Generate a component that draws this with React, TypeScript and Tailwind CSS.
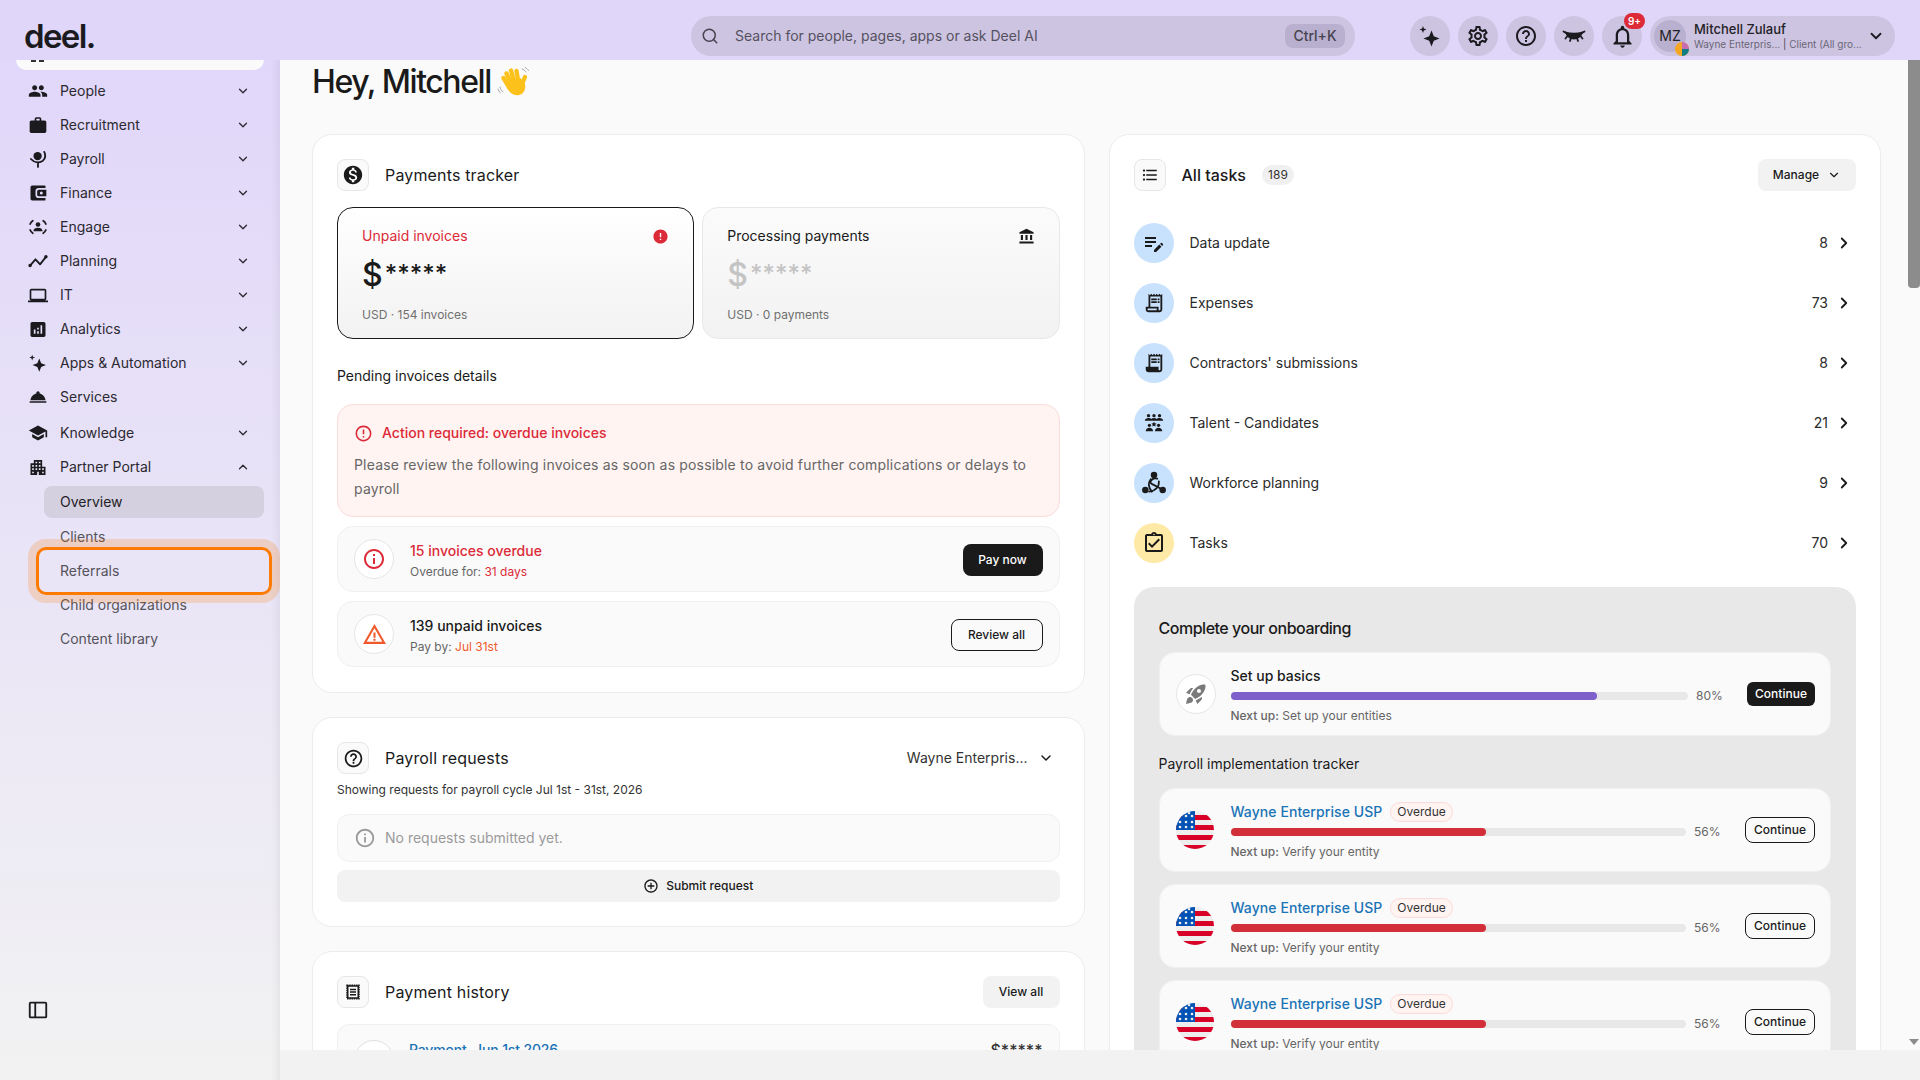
import type { ReactNode } from "react";
import { ChevronDown, ChevronRight, ChevronUp, Search } from "lucide-react";
import {
  MdAccountBalance,
  MdAddCircleOutline,
  MdAnalytics,
  MdApartment,
  MdEditNote,
  MdError,
  MdErrorOutline,
  MdFormatListBulleted,
  MdHelpOutline,
  MdInfoOutline,
  MdLaptop,
  MdMonetizationOn,
  MdOutlineAssignmentTurnedIn,
  MdOutlineNotifications,
  MdOutlineReceiptLong,
  MdOutlineSettings,
  MdPeople,
  MdReceiptLong,
  MdRocketLaunch,
  MdRoomService,
  MdSchool,
  MdWarningAmber,
  MdWork,
} from "react-icons/md";

function SparkleIcon({ size = 20 }: { size?: number }) {
  return (
    <svg width={size} height={size} viewBox="0 0 24 24" fill="currentColor">
      <path d="M13.5 6.5l2.3 5.7 5.7 2.3-5.7 2.3-2.3 5.7-2.3-5.7-5.7-2.3 5.7-2.3z" />
      <path d="M5 2l.9 2.6L8.5 5.5l-2.6.9L5 9l-.9-2.6L1.500 5.500l2.600-.9z" />
    </svg>
  );
}

function GlobeIcon() {
  return (
    <svg width={20} height={20} viewBox="0 0 24 24" fill="none" stroke="currentColor" strokeWidth="2.2" strokeLinecap="round">
      <circle cx="11.500" cy="8.500" r="5" fill="currentColor" stroke="none" />
      <path d="M19.500 3.500c2 4 1 8-1.500 10.500-3.500 3-10 3-14.500-2" />
      <path d="M12 17.500v4" />
    </svg>
  );
}

function WalletIcon() {
  return (
    <svg width={20} height={20} viewBox="0 0 24 24" fill="currentColor">
      <path fillRule="evenodd" d="M5 3h15a1 1 0 0 1 1 1v2h-8a4 4 0 0 0-4 4v4a4 4 0 0 0 4 4h8v2a1 1 0 0 1-1 1H5a2 2 0 0 1-2-2V5a2 2 0 0 1 2-2z" />
      <path fillRule="evenodd" d="M13 8h9v8h-9a2 2 0 0 1-2-2v-4a2 2 0 0 1 2-2zm3 2.200a1.800 1.800 0 1 0 0 3.600 1.800 1.800 0 0 0 0-3.600z" />
    </svg>
  );
}

function EngageIcon() {
  return (
    <svg width={20} height={20} viewBox="0 0 24 24" fill="none" stroke="currentColor" strokeWidth="2" strokeLinecap="round">
      <circle cx="12" cy="9" r="2.800" fill="currentColor" stroke="none" />
      <path d="M6.500 17c0-2.600 2.500-4 5.500-4s5.500 1.400 5.500 4z" fill="currentColor" stroke="none" />
      <path d="M2.500 8.500c.8-1.800 1.800-3 3.300-4M21.500 8.500c-.8-1.800-1.800-3-3.300-4M2.500 15.500c.8 1.800 1.800 3 3.300 4M21.500 15.500c-.8 1.800-1.800 3-3.300 4" />
    </svg>
  );
}

function PlanningIcon() {
  return (
    <svg width={22} height={22} viewBox="0 0 24 24" fill="none" stroke="currentColor" strokeWidth="2.200" strokeLinecap="round" strokeLinejoin="round">
      <path d="M2.500 17.500L9 10l5.500 6L21.500 7" />
      <circle cx="2.500" cy="17.500" r="1" fill="currentColor" />
      <circle cx="21.500" cy="7" r="1" fill="currentColor" />
    </svg>
  );
}

function LashIcon() {
  return (
    <svg width={24} height={24} viewBox="0 0 24 24" fill="currentColor" stroke="currentColor" strokeWidth="1.800" strokeLinecap="round">
      <path d="M4 8.500c4 1.500 12 1.500 16 0-1.500 4-4.500 6-8 6s-6.500-2-8-6z" />
      <path d="M4 9L1.500 7.500M20 9l2.500-1.500M5.500 12l-2 2.500M18.500 12l2 2.500M9 14l-1 3M15 14l1 3" fill="none" />
    </svg>
  );
}

function TalentIcon() {
  return (
    <svg width={22} height={22} viewBox="0 0 24 24" fill="currentColor">
      <circle cx="6" cy="4" r="1.800" />
      <circle cx="12" cy="4" r="1.800" />
      <circle cx="18" cy="4" r="1.800" />
      <path d="M2 9.500c0-2 2-3 4-3 1.300 0 2.400.4 3 1.100.7-.7 1.800-1.100 3-1.100s2.300.4 3 1.100c.6-.7 1.700-1.100 3-1.100 2 0 4 1 4 3z" />
      <path d="M12 10.500l.9 1.800 1.900.3-1.400 1.300.4 1.900-1.800-.9-1.800.9.400-1.900-1.400-1.300 1.900-.3z" />
      <circle cx="7" cy="14.500" r="1.800" />
      <circle cx="17" cy="14.500" r="1.800" />
      <path d="M3 21c0-2.500 1.800-3.800 4-3.800S11 18.500 11 21zM13 21c0-2.500 1.800-3.800 4-3.800s4 1.300 4 3.800z" />
    </svg>
  );
}

function WorkforceIcon() {
  return (
    <svg width={26} height={26} viewBox="0 0 24 24" fill="none" stroke="currentColor" strokeWidth="1.700" strokeLinecap="round">
      <circle cx="12" cy="4.500" r="3" fill="currentColor" stroke="none" />
      <circle cx="4" cy="18.500" r="3" fill="currentColor" stroke="none" />
      <circle cx="20" cy="18.500" r="3" fill="currentColor" stroke="none" />
      <path d="M9 8.500C6.500 12 7 16.500 10 20" />
      <path d="M15 8c-3.500-1-6 1-6.500 3.500 1.500 2.500 6 3 9 5.500" />
      <path d="M16.500 10.500c.5 4-2 8.500-9 9.500" />
    </svg>
  );
}

function HistoryIcon() {
  return (
    <svg width={18} height={18} viewBox="0 0 24 24" fill="none" stroke="currentColor" strokeWidth="2">
      <rect x="4" y="3" width="16" height="18" strokeDasharray="2 1" />
      <rect x="5" y="4" width="14" height="16" />
      <path d="M8 8.500h8M8 12h8M8 15.500h8" />
    </svg>
  );
}

function PanelIcon() {
  return (
    <svg width={22} height={22} viewBox="0 0 24 24" fill="none" stroke="currentColor" strokeWidth="2">
      <rect x="3" y="4" width="18" height="16" rx="1" />
      <path d="M9 4v16" />
    </svg>
  );
}

function UsFlag({ id }: { id: string }) {
  return (
    <svg width={38} height={38} viewBox="0 0 38 38" className="shrink-0">
      <defs>
        <clipPath id={id}>
          <circle cx="19" cy="19" r="19" />
        </clipPath>
      </defs>
      <g clipPath={`url(#${id})`}>
        <rect width="38" height="38" fill="#eeeeee" />
        <rect y="4" width="38" height="5" fill="#d80027" />
        <rect y="14" width="38" height="5" fill="#d80027" />
        <rect y="24" width="38" height="5" fill="#d80027" />
        <rect y="34" width="38" height="5" fill="#d80027" />
        <rect width="19" height="19" fill="#0052b4" />
        {[[5, 11], [11, 5], [11, 11], [17, 5], [17, 11], [5, 16], [11, 16], [17, 16], [14, 2]].map(([x, y]) => (
          <circle key={`${x}-${y}`} cx={x - 1} cy={y} r="1.300" fill="#eeeeee" />
        ))}
      </g>
    </svg>
  );
}

function WaveHand() {
  return (
    <svg width={34} height={34} viewBox="0 0 34 34" fill="none" strokeLinecap="round">
      <g stroke="#fcc21b">
        <path d="M12 22L6.500 13" strokeWidth="4.400" />
        <path d="M14 18L9.500 8.500" strokeWidth="4.400" />
        <path d="M17 16L14 5.500" strokeWidth="4.400" />
        <path d="M21 15L19.500 6" strokeWidth="4.400" />
        <path d="M25 19l3-7" strokeWidth="4.400" />
        <path d="M10 20c2 7 7 10 12 9 4-1 6-5 5-10l-4-5-9 2z" fill="#fcc21b" strokeWidth="2" />
      </g>
      <path d="M3 22c.5 2 1.500 4 3 5M1 24c.6 1.500 1.200 2.800 2.400 4M25 4c1.500.5 3 1.500 4 3M28 2.500c1.500.6 2.500 1.500 3.500 3" stroke="#9e9e9e" strokeWidth="0.900" />
    </svg>
  );
}

const navItems: { label: string; icon: ReactNode; chevron?: boolean }[] = [
  { label: "People", icon: <MdPeople size={22} />, chevron: true },
  { label: "Recruitment", icon: <MdWork size={21} />, chevron: true },
  { label: "Payroll", icon: <GlobeIcon />, chevron: true },
  { label: "Finance", icon: <WalletIcon />, chevron: true },
  { label: "Engage", icon: <EngageIcon />, chevron: true },
  { label: "Planning", icon: <PlanningIcon />, chevron: true },
  { label: "IT", icon: <MdLaptop size={23} />, chevron: true },
  { label: "Analytics", icon: <MdAnalytics size={21} />, chevron: true },
  { label: "Apps & Automation", icon: <SparkleIcon />, chevron: true },
  { label: "Services", icon: <MdRoomService size={22} /> },
];

const tasks: { label: string; count: number; icon: ReactNode; yellow?: boolean }[] = [
  { label: "Data update", count: 8, icon: <MdEditNote size={24} /> },
  { label: "Expenses", count: 73, icon: <MdOutlineReceiptLong size={22} /> },
  { label: "Contractors' submissions", count: 8, icon: <MdReceiptLong size={22} /> },
  { label: "Talent - Candidates", count: 21, icon: <TalentIcon /> },
  { label: "Workforce planning", count: 9, icon: <WorkforceIcon /> },
  { label: "Tasks", count: 70, icon: <MdOutlineAssignmentTurnedIn size={24} />, yellow: true },
];

function NavRow({ label, icon, chevron }: { label: string; icon: ReactNode; chevron?: boolean }) {
  return (
    <div className="flex h-[34px] items-center pl-7 pr-[30px] text-sm text-[#2b2930]">
      <span className="flex w-5 items-center justify-center text-[#1b1b1f]">{icon}</span>
      <span className="ml-3 flex-1">{label}</span>
      {chevron && <ChevronDown size={14} strokeWidth={2.2} />}
    </div>
  );
}

function Sidebar() {
  return (
    <aside className="w-[280px] shrink-0 bg-gradient-to-b from-[#e1d7fa] to-[#f2f2f2] shadow-[inset_-10px_0_10px_-8px_rgba(0,0,0,0.07)] flex flex-col">
      <div className="mx-4 h-[10px] w-[248px] rounded-b-xl bg-[#fafafa] flex gap-[3px] pl-[15px]">
        <span className="h-[2px] w-[5px] bg-[#333]" />
        <span className="h-[2px] w-[5px] bg-[#333]" />
      </div>
      <div className="mt-1">
        {navItems.map((item) => (
          <NavRow key={item.label} {...item} />
        ))}
      </div>
      <div className="mt-[2px]">
        <NavRow label="Knowledge" icon={<MdSchool size={22} />} chevron />
      </div>
      <div className="flex h-[34px] items-center pl-7 pr-[30px] text-sm text-[#2b2930]">
        <span className="flex w-5 items-center justify-center text-[#1b1b1f]">
          <MdApartment size={21} />
        </span>
        <span className="ml-3 flex-1">Partner Portal</span>
        <ChevronUp size={14} strokeWidth={2.2} />
      </div>
      <div className="mt-[2px] pl-11 pr-4 text-sm text-[#55535b]">
        <div className="flex h-8 items-center rounded-lg bg-[#d5d0e0] pl-[16px] text-[#232226]">Overview</div>
        <div className="mt-[2px] flex h-[34px] items-center pl-[16px]">Clients</div>
        <div className="relative flex h-[34px] items-center pl-[16px]">
          Referrals
          <div className="absolute left-[-16px] top-[-15px] h-[64px] w-[252px] rounded-[18px] border-[8px] border-[#ff7a00]/20">
            <div className="h-full w-full rounded-[10px] border-[3px] border-[#ff7a00]" />
          </div>
        </div>
        <div className="flex h-[34px] items-center pl-[16px]">Child organizations</div>
        <div className="flex h-[34px] items-center pl-[16px]">Content library</div>
      </div>
      <div className="mt-auto mb-[59px] pl-[27px] text-[#1b1b1f]">
        <PanelIcon />
      </div>
    </aside>
  );
}

function RoundButton({ children }: { children: ReactNode }) {
  return (
    <div className="relative flex h-10 w-10 items-center justify-center rounded-full bg-[#cdc4e2] text-[#1b1b1f]">
      {children}
    </div>
  );
}

function TopBar() {
  return (
    <header className="flex h-[60px] shrink-0 items-center bg-[#e0d6f9] pl-6 pt-3">
      <div className="w-[667px] text-[33px] font-semibold leading-none tracking-[-0.05em] text-[#1b1b1f]">deel.</div>
      <div className="flex h-10 w-[664px] items-center rounded-full bg-[#cdc4e2] pl-[10px] pr-[10px]">
        <Search size={18} className="text-[#47444f]" strokeWidth={2} />
        <span className="ml-[16px] flex-1 text-sm text-[#55525f]">Search for people, pages, apps or ask Deel AI</span>
        <span className="flex h-6 w-[60px] items-center justify-center rounded-lg bg-[#b9b0cf] text-sm font-medium text-[#47444f]">
          Ctrl+K
        </span>
      </div>
      <div className="ml-[55px] flex gap-2">
        <RoundButton>
          <SparkleIcon size={24} />
        </RoundButton>
        <RoundButton>
          <MdOutlineSettings size={24} />
        </RoundButton>
        <RoundButton>
          <MdHelpOutline size={24} />
        </RoundButton>
        <RoundButton>
          <LashIcon />
        </RoundButton>
        <RoundButton>
          <MdOutlineNotifications size={27} />
          <span className="absolute right-[-3px] top-[-3px] flex h-4 w-[21px] items-center justify-center rounded-full bg-[#dc2a38] text-[10px] font-semibold text-white">
            9+
          </span>
        </RoundButton>
      </div>
      <div className="ml-2 flex h-10 w-[245px] items-center rounded-full bg-[#cdc4e2] pl-1 pr-[10px]">
        <div className="relative flex h-8 w-8 items-center justify-center rounded-full bg-[#b9b0cf] text-sm text-[#232226]">
          MZ
          <svg className="absolute right-[-3px] bottom-[-4px]" width={14} height={14} viewBox="0 0 14 14">
            <circle cx="7" cy="7" r="7" fill="#f5a623" />
            <path d="M7 0a7 7 0 0 1 7 7H7z" fill="#c76bb3" />
            <path d="M14 7a7 7 0 0 1-7 7V7z" fill="#0f7c86" />
          </svg>
        </div>
        <div className="ml-2 flex-1 min-w-0">
          <div className="text-[13px] leading-4 font-medium text-[#232226]">Mitchell Zulauf</div>
          <div className="whitespace-nowrap text-[10px] leading-[14px] text-[#6a6675]">
            Wayne Enterpris... <span className="text-[#47444f]">|</span> Client (All gro...
          </div>
        </div>
        <ChevronDown size={18} strokeWidth={2.4} className="text-[#1b1b1f]" />
      </div>
    </header>
  );
}

function IconBox({ children }: { children: ReactNode }) {
  return (
    <div className="flex h-8 w-8 shrink-0 items-center justify-center rounded-lg border border-[#e6e6e6] bg-[#fafafa] text-[#1a1a1a]">
      {children}
    </div>
  );
}

function Card({ children }: { children: ReactNode }) {
  return <section className="rounded-[20px] border border-[#ececec] bg-white p-6">{children}</section>;
}

function PaymentsTracker() {
  return (
    <section className="rounded-[20px] border border-[#ececec] bg-white p-6 pb-[25px]">
      <div className="flex items-center">
        <IconBox>
          <MdMonetizationOn size={22} />
        </IconBox>
        <span className="ml-4 text-base font-normal tracking-[0.01em] text-[#1a1a1a]">Payments tracker</span>
      </div>
      <div className="mt-4 grid grid-cols-2 gap-2">
        <div className="h-[132px] rounded-2xl border border-[#1a1a1a] bg-gradient-to-b from-white to-[#f2f2f2] px-6 pt-[18px]">
          <div className="flex h-5 items-center justify-between text-sm text-[#dc2a38]">
            Unpaid invoices
            <MdError size={17} />
          </div>
          <div className="mt-[9px] flex h-9 items-baseline font-medium leading-9 text-[#1a1a1a]">
            <span className="translate-y-[2px] text-[32px]">$</span>
            <span className="ml-[2px] -translate-y-[2px] text-[24px]">*****</span>
          </div>
          <div className="mt-4 h-4 text-xs leading-4 text-[#707070]">USD · 154 invoices</div>
        </div>
        <div className="h-[132px] rounded-2xl border border-[#e8e8e8] bg-gradient-to-b from-[#fbfbfb] to-[#f2f2f2] px-6 pt-[18px]">
          <div className="flex h-5 items-center justify-between text-sm text-[#1a1a1a]">
            Processing payments
            <MdAccountBalance size={17} />
          </div>
          <div className="mt-[9px] flex h-9 items-baseline font-medium leading-9 text-[#c4c4c4]">
            <span className="translate-y-[2px] text-[32px]">$</span>
            <span className="ml-[2px] -translate-y-[2px] text-[24px]">*****</span>
          </div>
          <div className="mt-4 h-4 text-xs leading-4 text-[#707070]">USD · 0 payments</div>
        </div>
      </div>
      <div className="mt-[27px] mb-[18px] text-sm leading-5 text-[#1a1a1a]">Pending invoices details</div>
      <div className="rounded-2xl border border-[#fbdcd9] bg-[#fff4f2] pl-4 pr-4 pt-[18px] pb-[15px]">
        <div className="flex h-5 items-center text-sm font-medium text-[#dc2a38]">
          <MdErrorOutline size={19} />
          <span className="ml-[9px]">Action required: overdue invoices</span>
        </div>
        <p className="mt-[10px] text-sm leading-6 tracking-[0.012em] text-[#666666]">
          Please review the following invoices as soon as possible to avoid further complications or delays to payroll
        </p>
      </div>
      <div className="mt-[9px] flex h-[66px] items-center rounded-2xl border border-[#f0f0f0] bg-[#fafafa] pl-4 pr-4">
        <div className="flex h-10 w-10 items-center justify-center rounded-full border border-[#e6e6e6] bg-white text-[#dc2a38]">
          <MdInfoOutline size={24} />
        </div>
        <div className="ml-4 flex-1 pt-[2px]">
          <div className="text-sm leading-5 font-medium text-[#dc2a38]">15 invoices overdue</div>
          <div className="mt-[3px] text-xs leading-4 text-[#666666]">
            Overdue for: <span className="text-[#dc2a38]">31 days</span>
          </div>
        </div>
        <button className="mt-[2px] h-8 w-20 rounded-lg bg-[#1a1a1a] text-xs font-medium text-white">Pay now</button>
      </div>
      <div className="mt-[9px] flex h-[66px] items-center rounded-2xl border border-[#f0f0f0] bg-[#fafafa] pl-4 pr-4">
        <div className="flex h-10 w-10 items-center justify-center rounded-full border border-[#e6e6e6] bg-white text-[#f0592b]">
          <MdWarningAmber size={25} />
        </div>
        <div className="ml-4 flex-1 pt-[2px]">
          <div className="text-sm leading-5 font-medium text-[#1a1a1a]">139 unpaid invoices</div>
          <div className="mt-[3px] text-xs leading-4 text-[#666666]">
            Pay by: <span className="text-[#f0592b]">Jul 31st</span>
          </div>
        </div>
        <button className="mt-[2px] h-8 w-[92px] rounded-lg border border-[#1a1a1a] text-xs font-medium text-[#1a1a1a]">Review all</button>
      </div>
    </section>
  );
}

function PayrollRequests() {
  return (
    <Card>
      <div className="flex items-center">
        <IconBox>
          <MdHelpOutline size={21} />
        </IconBox>
        <span className="ml-4 flex-1 text-base tracking-[0.01em] text-[#1a1a1a]">Payroll requests</span>
        <span className="text-sm text-[#333333]">Wayne Enterpris...</span>
        <ChevronDown size={16} strokeWidth={2.2} className="ml-[10px] mr-[6px] text-[#1a1a1a]" />
      </div>
      <div className="mt-2 text-xs leading-4 text-[#333333]">Showing requests for payroll cycle Jul 1st - 31st, 2026</div>
      <div className="mt-4 flex h-12 items-center rounded-xl border border-[#f0f0f0] bg-[#fafafa] pl-4 text-sm text-[#9a9a9a]">
        <MdInfoOutline size={22} />
        <span className="ml-[9px]">No requests submitted yet.</span>
      </div>
      <button className="mt-2 flex h-8 w-full items-center justify-center rounded-lg bg-[#f2f2f2] text-xs font-medium text-[#1a1a1a]">
        <MdAddCircleOutline size={16} />
        <span className="ml-[7px]">Submit request</span>
      </button>
    </Card>
  );
}

function PaymentHistory() {
  return (
    <Card>
      <div className="flex items-center">
        <IconBox>
          <HistoryIcon />
        </IconBox>
        <span className="ml-4 flex-1 text-base tracking-[0.01em] text-[#1a1a1a]">Payment history</span>
        <button className="h-8 w-[77px] rounded-lg bg-[#f2f2f2] text-xs font-medium text-[#1a1a1a]">View all</button>
      </div>
      <div className="mt-4 flex h-[72px] items-start rounded-xl border border-[#f0f0f0] bg-[#fafafa] pl-4 pr-4 pt-[15px]">
        <div className="h-10 w-10 rounded-full border border-[#e0e0e0] bg-white" />
        <div className="ml-[15px] flex-1 text-sm font-medium leading-5 tracking-[-0.01em] text-[#1a73b5]">Payment, Jun 1st 2026</div>
        <div className="text-base font-medium leading-5 text-[#333]">$*****</div>
      </div>
    </Card>
  );
}

function TaskRow({ label, count, icon, yellow }: { label: string; count: number; icon: ReactNode; yellow?: boolean }) {
  return (
    <div className="flex h-[60px] items-center">
      <div
        className={`flex h-10 w-10 items-center justify-center rounded-full text-[#1a1a1a] ${
          yellow ? "bg-[#ffe9a6]" : "bg-[#c8e2fe]"
        }`}
      >
        {icon}
      </div>
      <span className="ml-4 flex-1 text-sm text-[#2a2a2a]">{label}</span>
      <span className="text-sm text-[#2a2a2a]">{count}</span>
      <ChevronRight size={18} strokeWidth={2.4} className="ml-[7px] mr-[3px] text-[#1a1a1a]" />
    </div>
  );
}

function Progress({ pct, color }: { pct: number; color: string }) {
  return (
    <div className="flex h-4 items-center gap-2">
      <div className="h-2 flex-1 rounded-full bg-[#e8e8e8]">
        <div className="h-full rounded-full" style={{ width: `${pct}%`, backgroundColor: color }} />
      </div>
      <span className="w-[39px] text-xs text-[#666666]">{pct}%</span>
    </div>
  );
}

function TrackerCard({ id }: { id: string }) {
  return (
    <div className="flex h-[84px] items-center rounded-2xl border border-[#f0f0f0] bg-[#fafafa] pl-4 pr-[15px]">
      <UsFlag id={id} />
      <div className="ml-[17px] flex-1 min-w-0 pt-[2px]">
        <div className="flex h-5 items-center">
          <span className="text-sm font-medium tracking-[0.005em] text-[#1a73b5]">Wayne Enterprise USP</span>
          <span className="ml-2 flex h-5 items-center rounded-full border border-[#fbdcd9] bg-[#fff4f2] px-[6px] text-xs text-[#333333]">
            Overdue
          </span>
        </div>
        <div className="mt-[2px]">
          <Progress pct={56} color="#d32f38" />
        </div>
        <div className="mt-1 text-xs leading-4 text-[#666666]">
          <span className="font-medium">Next up:</span> Verify your entity
        </div>
      </div>
      <button className="ml-3 h-[26px] w-[70px] rounded-lg border border-[#1a1a1a] text-xs font-medium text-[#1a1a1a]">
        Continue
      </button>
    </div>
  );
}

function AllTasks() {
  return (
    <section className="rounded-[20px] border border-[#ececec] bg-white p-6 pb-0">
      <div className="flex items-center">
        <IconBox>
          <MdFormatListBulleted size={18} />
        </IconBox>
        <span className="ml-4 text-base font-medium text-[#1a1a1a]">All tasks</span>
        <span className="ml-4 flex h-5 w-8 items-center justify-center rounded-full bg-[#f0f0f0] text-xs text-[#333333]">189</span>
        <button className="ml-auto flex h-8 w-[98px] items-center justify-center rounded-lg bg-[#f2f2f2] text-xs font-medium text-[#1a1a1a]">
          Manage
          <ChevronDown size={14} className="ml-2" />
        </button>
      </div>
      <div className="mt-[22px]">
        {tasks.map((task) => (
          <TaskRow key={task.label} {...task} />
        ))}
      </div>
      <div className="mt-[14px] rounded-t-[20px] bg-[#e8e8e8] pl-[25px] pr-[25px] pt-[31px] pb-6">
        <div className="text-base leading-5 font-medium tracking-[-0.03em] text-[#1a1a1a]">Complete your onboarding</div>
        <div className="mt-[14px] flex h-[84px] items-center rounded-2xl border border-[#f0f0f0] bg-[#fafafa] pl-4 pr-[15px]">
          <div className="flex h-10 w-10 shrink-0 items-center justify-center rounded-full border border-[#e6e6e6] bg-white text-[#7a7a7a]">
            <MdRocketLaunch size={24} />
          </div>
          <div className="ml-[15px] flex-1 min-w-0 pt-[2px]">
            <div className="h-5 text-sm leading-5 font-medium text-[#1a1a1a]">Set up basics</div>
            <div className="mt-[2px]">
              <Progress pct={80} color="#7f5fc9" />
            </div>
            <div className="mt-1 text-xs leading-4 text-[#666666]">
              <span className="font-medium">Next up:</span> Set up your entities
            </div>
          </div>
          <button className="ml-3 h-6 w-[68px] rounded-md bg-[#1a1a1a] text-xs font-medium text-white">Continue</button>
        </div>
        <div className="mt-[18px] mb-[14px] text-sm leading-5 text-[#1a1a1a]">Payroll implementation tracker</div>
        <div className="flex flex-col gap-3">
          <TrackerCard id="us-a" />
          <TrackerCard id="us-b" />
          <TrackerCard id="us-c" />
        </div>
      </div>
    </section>
  );
}

function Scrollbar() {
  return (
    <div className="absolute right-0 top-0 bottom-0 w-3 bg-[#fafafa]">
      <div className="h-[228px] w-full rounded-b-[4px] bg-[#8c8c8c]" />
      <div className="absolute bottom-[5px] left-[1px] h-0 w-0 border-x-[5px] border-t-[6px] border-x-transparent border-t-[#8c8c8c]" />
    </div>
  );
}

export default function App() {
  return (
    <div className="flex h-screen w-screen flex-col overflow-hidden bg-[#f2f2f2] font-['Inter',sans-serif]">
      <TopBar />
      <div className="flex min-h-0 flex-1">
        <Sidebar />
        <div className="flex min-w-0 flex-1 flex-col">
          <main className="relative min-h-0 flex-1 overflow-hidden bg-[#fafafa] pl-8">
            <div className="mt-[2px] mb-[32px] flex h-10 items-center text-[32px] font-medium tracking-[-0.045em] text-[#1a1a1a]">
              Hey, Mitchell
              <span className="ml-[6px]">
                <WaveHand />
              </span>
            </div>
            <div className="grid w-[1569px] grid-cols-2 items-start gap-6">
              <div className="flex flex-col gap-6">
                <PaymentsTracker />
                <PayrollRequests />
                <PaymentHistory />
              </div>
              <AllTasks />
            </div>
            <Scrollbar />
          </main>
          <div className="h-[30px] shrink-0 bg-[#f2f2f2]" />
        </div>
      </div>
    </div>
  );
}
